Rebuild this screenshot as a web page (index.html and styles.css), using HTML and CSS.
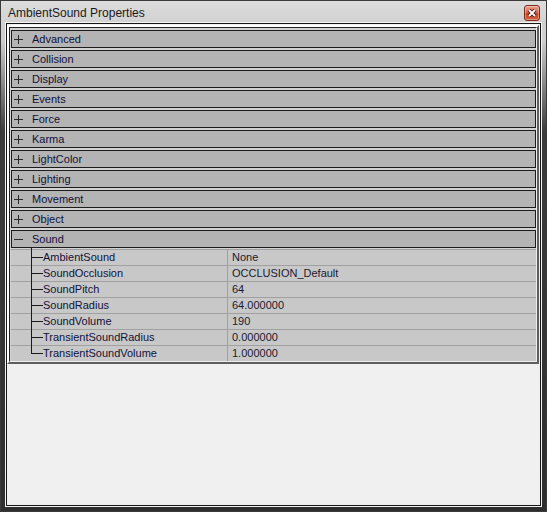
FILE: index.html
```html
<!DOCTYPE html>
<html>
<head>
<meta charset="utf-8">
<title>AmbientSound Properties</title>
<link rel="stylesheet" href="styles.css">
</head>
<body>
<div class="window">
  <div class="titlebar">
    <span class="title">AmbientSound Properties</span>
    <div class="close"><svg width="14" height="14" viewBox="0 0 14 14"><path d="M4 4L10 10M10 4L4 10" stroke="#4a1c12" stroke-width="3.8"/><path d="M4 4L10 10M10 4L4 10" stroke="#ffffff" stroke-width="1.8"/></svg></div>
  </div>
  <div class="client">
    <div class="grid">
      <div class="grid-inner">
        <div class="cat"><svg class="pm" width="9" height="9" viewBox="0 0 9 9"><path d="M0 4.5H9M4.5 0V9" stroke="#2a2a2a" stroke-width="1"/></svg><span>Advanced</span></div>
        <div class="cat"><svg class="pm" width="9" height="9" viewBox="0 0 9 9"><path d="M0 4.5H9M4.5 0V9" stroke="#2a2a2a" stroke-width="1"/></svg><span>Collision</span></div>
        <div class="cat"><svg class="pm" width="9" height="9" viewBox="0 0 9 9"><path d="M0 4.5H9M4.5 0V9" stroke="#2a2a2a" stroke-width="1"/></svg><span>Display</span></div>
        <div class="cat"><svg class="pm" width="9" height="9" viewBox="0 0 9 9"><path d="M0 4.5H9M4.5 0V9" stroke="#2a2a2a" stroke-width="1"/></svg><span>Events</span></div>
        <div class="cat"><svg class="pm" width="9" height="9" viewBox="0 0 9 9"><path d="M0 4.5H9M4.5 0V9" stroke="#2a2a2a" stroke-width="1"/></svg><span>Force</span></div>
        <div class="cat"><svg class="pm" width="9" height="9" viewBox="0 0 9 9"><path d="M0 4.5H9M4.5 0V9" stroke="#2a2a2a" stroke-width="1"/></svg><span>Karma</span></div>
        <div class="cat"><svg class="pm" width="9" height="9" viewBox="0 0 9 9"><path d="M0 4.5H9M4.5 0V9" stroke="#2a2a2a" stroke-width="1"/></svg><span>LightColor</span></div>
        <div class="cat"><svg class="pm" width="9" height="9" viewBox="0 0 9 9"><path d="M0 4.5H9M4.5 0V9" stroke="#2a2a2a" stroke-width="1"/></svg><span>Lighting</span></div>
        <div class="cat"><svg class="pm" width="9" height="9" viewBox="0 0 9 9"><path d="M0 4.5H9M4.5 0V9" stroke="#2a2a2a" stroke-width="1"/></svg><span>Movement</span></div>
        <div class="cat"><svg class="pm" width="9" height="9" viewBox="0 0 9 9"><path d="M0 4.5H9M4.5 0V9" stroke="#2a2a2a" stroke-width="1"/></svg><span>Object</span></div>
        <div class="cat open"><svg class="pm" width="9" height="9" viewBox="0 0 9 9"><path d="M0 4.5H9" stroke="#2a2a2a" stroke-width="1"/></svg><span>Sound</span></div>
        <div class="props">
          <div class="row first"><span class="gutter"></span><span class="tree"></span><span class="name">AmbientSound</span><span class="val">None</span></div>
          <div class="row"><span class="gutter"></span><span class="tree"></span><span class="name">SoundOcclusion</span><span class="val">OCCLUSION_Default</span></div>
          <div class="row"><span class="gutter"></span><span class="tree"></span><span class="name">SoundPitch</span><span class="val">64</span></div>
          <div class="row"><span class="gutter"></span><span class="tree"></span><span class="name">SoundRadius</span><span class="val">64.000000</span></div>
          <div class="row"><span class="gutter"></span><span class="tree"></span><span class="name">SoundVolume</span><span class="val">190</span></div>
          <div class="row"><span class="gutter"></span><span class="tree"></span><span class="name">TransientSoundRadius</span><span class="val">0.000000</span></div>
          <div class="row last"><span class="gutter"></span><span class="tree"></span><span class="name">TransientSoundVolume</span><span class="val">1.000000</span></div>
        </div>
      </div>
    </div>
  </div>
</div>
</body>
</html>
```
FILE: styles.css
```css
* { box-sizing: border-box; }
html, body { margin: 0; padding: 0; }
body {
  width: 547px;
  height: 512px;
  overflow: hidden;
  background: #ffffff;
  font-family: "Liberation Sans", Arial, sans-serif;
}
.window {
  width: 547px;
  height: 512px;
  border: 1px solid #3a3a3a;
  padding: 0 5px 5px 5px;
  display: flex;
  flex-direction: column;
  background: linear-gradient(#d4d4d4 0, #cecece 40px, #3c3c3c 130px, #2e2e2e 100%);
}
.titlebar {
  margin: 0 -5px;
  height: 22px;
  flex: none;
  display: flex;
  justify-content: space-between;
  align-items: flex-start;
  padding: 4px 6px 0 7px;
  background: linear-gradient(#dcdcdc, #d2d2d2);
}
.title {
  font-size: 12px;
  line-height: 16px;
  color: #1a1a1a;
}
.close {
  width: 16px;
  height: 16px;
  border: 1px solid #7c2a1a;
  border-radius: 3px;
  background: linear-gradient(#eba08e 0, #d8694c 45%, #c5401f 55%, #d86444 100%);
  display: flex;
  align-items: center;
  justify-content: center;
  box-shadow: inset 0 0 0 1px rgba(255,255,255,0.35);
}
.close svg { display: block; }
.client {
  flex: 1;
  border: 1px solid #141414;
  box-shadow: 0 0 0 1px #f4f4f4;
  background: #f0f0f0;
  padding: 1px 1px 0 0;
}
.grid {
  border-style: solid;
  border-width: 2px;
  border-color: #ffffff #5e5e5e #5e5e5e #ffffff;
}
.grid-inner {
  border: 1px solid;
  border-color: #222222 #ececec #ececec #222222;
  background: #d2d2d2;
  padding: 2px 0 0 1px;
}
.cat {
  height: 18px;
  border: 1px solid #1c1c1c;
  background: #b4b4b4;
  margin-bottom: 2px;
  display: flex;
  align-items: center;
  padding-left: 2px;
  font-size: 11px;
  line-height: 16px;
  color: #10103a;
}
.cat.open { margin-bottom: 1px; }
.pm { display: block; margin-right: 9px; flex: none; }
.props { background: #c8c8c8; }
.row {
  display: flex;
  height: 16px;
  border-top: 1px solid #a0a0a0;
  font-size: 11px;
  line-height: 15px;
}
.gutter { width: 20px; flex: none; }
.tree {
  width: 12px;
  flex: none;
  margin-top: -1px;
  background:
    linear-gradient(#1a1a1a, #1a1a1a) 0 0 / 1px 100% no-repeat,
    linear-gradient(#1a1a1a, #1a1a1a) 0 8px / 12px 1px no-repeat;
}
.row.first .tree {
  margin-top: -2px;
  background:
    linear-gradient(#1a1a1a, #1a1a1a) 0 0 / 1px 100% no-repeat,
    linear-gradient(#1a1a1a, #1a1a1a) 0 9px / 12px 1px no-repeat;
}
.row.last .tree {
  background:
    linear-gradient(#1a1a1a, #1a1a1a) 0 0 / 1px 9px no-repeat,
    linear-gradient(#1a1a1a, #1a1a1a) 0 8px / 12px 1px no-repeat;
}
.name {
  width: 184px;
  flex: none;
  color: #12123a;
  white-space: nowrap;
  overflow: hidden;
}
.val {
  flex: 1;
  border-left: 1px solid #a0a0a0;
  padding-left: 4px;
  color: #1a1a30;
  white-space: nowrap;
}
```
